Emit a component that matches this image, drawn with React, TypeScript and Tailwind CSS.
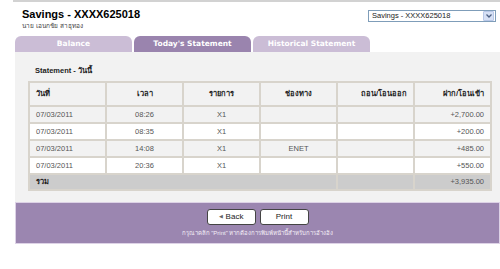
import type { ReactNode } from 'react';

type Row = { date: string; time: string; item: string; channel: string; out: string; inn: string };

const ROWS: Row[] = [
  { date: '07/03/2011', time: '08:26', item: 'X1', channel: '', out: '', inn: '+2,700.00' },
  { date: '07/03/2011', time: '08:35', item: 'X1', channel: '', out: '', inn: '+200.00' },
  { date: '07/03/2011', time: '14:08', item: 'X1', channel: 'ENET', out: '', inn: '+485.00' },
  { date: '07/03/2011', time: '20:36', item: 'X1', channel: '', out: '', inn: '+550.00' },
];

const FONT = { fontFamily: '"Liberation Sans", "Noto Sans", Arial, sans-serif' };
const TAB_FONT = { fontFamily: '"DejaVu Sans", Verdana, sans-serif' };

function Tab({ label, active }: { label: string; active?: boolean }) {
  return (
    <div
      style={TAB_FONT}
      className={
        'flex h-[16px] w-[117px] items-center justify-center rounded-t-[6px] text-[7.5px] font-bold text-white ' +
        (active ? 'bg-[#9a84ae]' : 'bg-[#cbbdd6]')
      }
    >
      {label}
    </div>
  );
}

function Td({ children, align = 'center', bold }: { children?: ReactNode; align?: 'left' | 'center' | 'right'; bold?: boolean }) {
  const a = align === 'left' ? 'text-left pl-[6px]' : align === 'right' ? 'text-right pr-[6px]' : 'text-center';
  return (
    <td className={'w-[77px] border-2 border-[#d8d4cc] p-0 ' + a + (bold ? ' font-bold text-[#222]' : ' text-[#555]')}>
      {children}
    </td>
  );
}

export default function App() {
  return (
    <div style={FONT} className="h-[269px] w-[500px] overflow-hidden bg-white">
      <div className="ml-[13px] h-[2px] bg-[#d2d2d2]" />

      <div className="flex items-start justify-between pl-[22px] pr-[4px] pt-[6px]">
        <div>
          <div className="text-[11px] font-bold leading-[13px] text-black">Savings - XXXX625018</div>
          <div className="mt-[1px] text-[6.5px] leading-[8px] text-[#444]">นาย เอนกชัย สาธุทอง</div>
        </div>
        <div className="mt-[2px] flex h-[12px] w-[128px] items-center border border-[#7f9db9] bg-white">
          <span className="flex-1 pl-[3px] text-[7.5px] leading-none text-[#222]">Savings - XXXX625018</span>
          <span className="mr-[1px] flex h-[10px] w-[11px] items-center justify-center rounded-[1px] border border-[#b8c8e8] bg-[#d6e0f5]">
            <svg width="6" height="4" viewBox="0 0 6 4">
              <path d="M0.5 0.5 L3 3 L5.5 0.5" fill="none" stroke="#4d6185" strokeWidth="1.3" />
            </svg>
          </span>
        </div>
      </div>

      <div className="ml-[15px] mt-[6px] flex gap-[2px]">
        <Tab label="Balance" />
        <Tab label="Today's Statement" active />
        <Tab label="Historical Statement" />
      </div>

      <div className="ml-[15px] h-[150px] w-[485px] bg-[#f2f2f2] pl-[13px] pt-[14px]">
        <div className="pl-[7px] text-[7.5px] font-bold leading-[10px] text-[#222]">Statement - วันนี้</div>
        <table className="mt-[5px] w-[462px] table-fixed border-collapse border-2 border-[#d8d4cc] text-[7.5px]">
          <thead>
            <tr className="h-[24px] bg-[#f2f2f2]">
              <Td align="left" bold>วันที่</Td>
              <Td bold>เวลา</Td>
              <Td bold>รายการ</Td>
              <Td bold>ช่องทาง</Td>
              <Td align="right" bold>ถอน/โอนออก</Td>
              <Td align="right" bold>ฝาก/โอนเข้า</Td>
            </tr>
          </thead>
          <tbody>
            {ROWS.map((r, i) => (
              <tr key={i} className={'h-[17px] ' + (i % 2 === 0 ? 'bg-[#f2f2f2]' : 'bg-white')}>
                <Td align="left">{r.date}</Td>
                <Td>{r.time}</Td>
                <Td>{r.item}</Td>
                <Td>{r.channel}</Td>
                <Td align="right">{r.out}</Td>
                <Td align="right">{r.inn}</Td>
              </tr>
            ))}
            <tr className="h-[16px] bg-[#cccccc]">
              <td colSpan={4} className="border-2 border-[#d8d4cc] pl-[6px] text-left font-bold text-[#222]">
                รวม
              </td>
              <td className="border-2 border-[#d8d4cc]" />
              <td className="border-2 border-[#d8d4cc] pr-[6px] text-right text-[#555]">+3,935.00</td>
            </tr>
          </tbody>
        </table>
      </div>

      <div className="ml-[15px] flex h-[42px] w-[485px] flex-col items-center border border-[#ddd2e6] bg-[#9b86b0] pt-[6px]">
        <div className="flex gap-[4px]">
          <button className="flex h-[16px] w-[49px] items-center justify-center gap-[3px] rounded-[3px] border border-[#444] bg-white text-[8px] text-[#222]">
            <span className="text-[5px] text-[#666]">◀</span>Back
          </button>
          <button className="flex h-[16px] w-[49px] items-center justify-center rounded-[3px] border border-[#444] bg-white text-[8px] text-[#222]">
            Print
          </button>
        </div>
        <div className="mt-[4px] text-[6px] leading-[8px] text-[#f3eef7]">
          กรุณาคลิก "Print" หากต้องการพิมพ์หน้านี้สำหรับการอ้างอิง
        </div>
      </div>
    </div>
  );
}
